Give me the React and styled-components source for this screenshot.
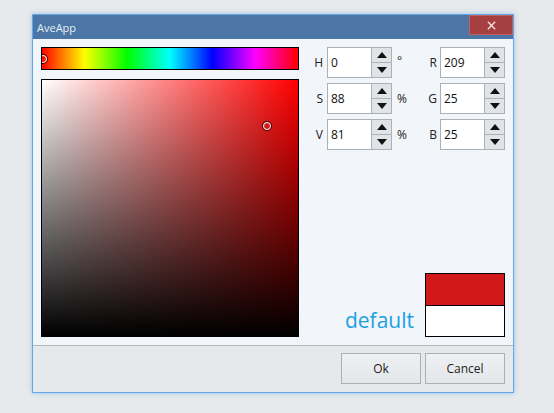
import styled, { createGlobalStyle } from "styled-components";

const Global = createGlobalStyle`
  body {
    margin: 0;
    background: #e7eaed;
    font-family: "Open Sans", "Noto Sans", sans-serif;
    font-size: 12px;
  }
`;

const Page = styled.div`
  width: 554px;
  height: 413px;
  padding: 14px 0 0 32px;
  box-sizing: border-box;
`;

const Window = styled.div`
  width: 482px;
  height: 379px;
  box-sizing: border-box;
  border: 1px solid #63a8e6;
  box-shadow: 0 0 5px rgba(90, 160, 225, 0.55);
  display: flex;
  flex-direction: column;
  background: #f2f5f9;
`;

const TitleBar = styled.div`
  height: 24px;
  background: #4b76a6;
  display: flex;
  align-items: center;
  justify-content: space-between;
  padding-left: 4px;
  color: #e6edf5;
  font-size: 11px;
`;

const CloseButton = styled.div`
  width: 44px;
  height: 20px;
  align-self: flex-start;
  box-sizing: border-box;
  background: #a63f3f;
  border: 1px solid #c06060;
  display: flex;
  align-items: center;
  justify-content: center;
`;

const Body = styled.div`
  flex: 1;
  display: flex;
  padding: 8px;
  gap: 8px;
`;

const LeftColumn = styled.div`
  width: 258px;
  display: flex;
  flex-direction: column;
  gap: 9px;
`;

const HueBar = styled.div`
  position: relative;
  height: 23px;
  box-sizing: border-box;
  border: 1px solid #000;
  overflow: hidden;
  background: linear-gradient(
    to right,
    #f00 0%,
    #ff0 16.6%,
    #0f0 33.3%,
    #0ff 50%,
    #00f 66.6%,
    #f0f 83.3%,
    #f00 100%
  );
`;

const SVBox = styled.div`
  position: relative;
  height: 258px;
  box-sizing: border-box;
  border: 1px solid #000;
  background: linear-gradient(to top, #000, rgba(0, 0, 0, 0)),
    linear-gradient(to right, #fff, rgba(255, 255, 255, 0)), #f00;
`;

const Marker = styled.div`
  position: absolute;
  width: 6px;
  height: 6px;
  margin: -4px 0 0 -4px;
  border-radius: 50%;
  border: 1px solid #fff;
  box-shadow: 0 0 0 1px rgba(0, 0, 0, 0.7);
`;

const RightColumn = styled.div`
  flex: 1;
  display: flex;
  flex-direction: column;
  justify-content: space-between;
`;

const Grid = styled.div`
  display: grid;
  grid-template-columns: 20px 65px 33px 15px 65px;
  grid-auto-rows: 31px;
  row-gap: 5px;
  align-items: center;
`;

const Label = styled.div`
  text-align: right;
  padding-right: ${({ $pad }) => $pad}px;
  color: #222;
`;

const Unit = styled.div`
  padding-left: 5px;
  color: #222;
  align-self: ${({ $top }) => ($top ? "start" : "center")};
  padding-top: ${({ $top }) => ($top ? "5px" : "0")};
`;

const Spin = styled.div`
  height: 31px;
  box-sizing: border-box;
  border: 1px solid #abb1b8;
  background: #fff;
  display: flex;
`;

const SpinValue = styled.div`
  flex: 1;
  display: flex;
  align-items: center;
  padding-left: 3px;
  color: #111;
`;

const SpinButtons = styled.div`
  width: 19px;
  display: flex;
  flex-direction: column;
  border-left: 1px solid #abb1b8;
`;

const SpinButton = styled.div`
  flex: 1;
  background: #e1e4e7;
  border-top: ${({ $down }) => ($down ? "1px solid #abb1b8" : "none")};
  display: flex;
  align-items: center;
  justify-content: center;
`;

const Arrow = styled.div`
  width: 0;
  height: 0;
  border-left: 5px solid transparent;
  border-right: 5px solid transparent;
  ${({ $down }) =>
    $down ? "border-top: 6px solid #111;" : "border-bottom: 6px solid #111;"}
`;

const PreviewRow = styled.div`
  display: flex;
  align-items: flex-end;
  justify-content: flex-end;
  gap: 11px;
`;

const DefaultText = styled.div`
  font-size: 21px;
  color: #1ba1e2;
  line-height: 1;
  margin-bottom: 6px;
`;

const Preview = styled.div`
  width: 80px;
  height: 64px;
  box-sizing: border-box;
  border: 1px solid #000;
  display: flex;
  flex-direction: column;
`;

const Swatch = styled.div`
  flex: 1;
  background: ${({ $color }) => $color};
  border-top: ${({ $split }) => ($split ? "1px solid #000" : "none")};
`;

const Footer = styled.div`
  height: 47px;
  box-sizing: border-box;
  border-top: 1px solid #b5babf;
  background: #e6e9eb;
  display: flex;
  justify-content: flex-end;
  align-items: flex-start;
  gap: 4px;
  padding: 7px 8px 0 0;
`;

const Button = styled.div`
  width: 80px;
  height: 31px;
  box-sizing: border-box;
  border: 1px solid #acb0b4;
  background: linear-gradient(#eef0f2, #e4e7ea);
  display: flex;
  align-items: center;
  justify-content: center;
  color: #222;
`;

function SpinBox({ value }) {
  return (
    <Spin>
      <SpinValue>{value}</SpinValue>
      <SpinButtons>
        <SpinButton>
          <Arrow />
        </SpinButton>
        <SpinButton $down>
          <Arrow $down />
        </SpinButton>
      </SpinButtons>
    </Spin>
  );
}

const rows = [
  { a: "H", av: "0", unit: "°", b: "R", bv: "209" },
  { a: "S", av: "88", unit: "%", b: "G", bv: "25" },
  { a: "V", av: "81", unit: "%", b: "B", bv: "25" },
];

export default function App() {
  const s = 0.88;
  const v = 0.81;
  return (
    <Page>
      <Global />
      <Window>
        <TitleBar>
          <span>AveApp</span>
          <CloseButton>
            <svg width="11" height="11" viewBox="0 0 12 12">
              <path d="M2 2L10 10M10 2L2 10" stroke="#f4e4e4" strokeWidth="1.5" />
            </svg>
          </CloseButton>
        </TitleBar>
        <Body>
          <LeftColumn>
            <HueBar>
              <Marker style={{ left: 1, top: 11 }} />
            </HueBar>
            <SVBox>
              <Marker style={{ left: s * 256, top: (1 - v) * 242 }} />
            </SVBox>
          </LeftColumn>
          <RightColumn>
            <Grid>
              {rows.map((r) => [
                <Label key={r.a + "l"} $pad={4}>{r.a}</Label>,
                <SpinBox key={r.a + "s"} value={r.av} />,
                <Unit key={r.a + "u"} $top={r.unit === "°"}>{r.unit}</Unit>,
                <Label key={r.b + "l"} $pad={3}>{r.b}</Label>,
                <SpinBox key={r.b + "s"} value={r.bv} />,
              ])}
            </Grid>
            <PreviewRow>
              <DefaultText>default</DefaultText>
              <Preview>
                <Swatch $color="#d11919" />
                <Swatch $color="#fff" $split />
              </Preview>
            </PreviewRow>
          </RightColumn>
        </Body>
        <Footer>
          <Button>Ok</Button>
          <Button>Cancel</Button>
        </Footer>
      </Window>
    </Page>
  );
}
